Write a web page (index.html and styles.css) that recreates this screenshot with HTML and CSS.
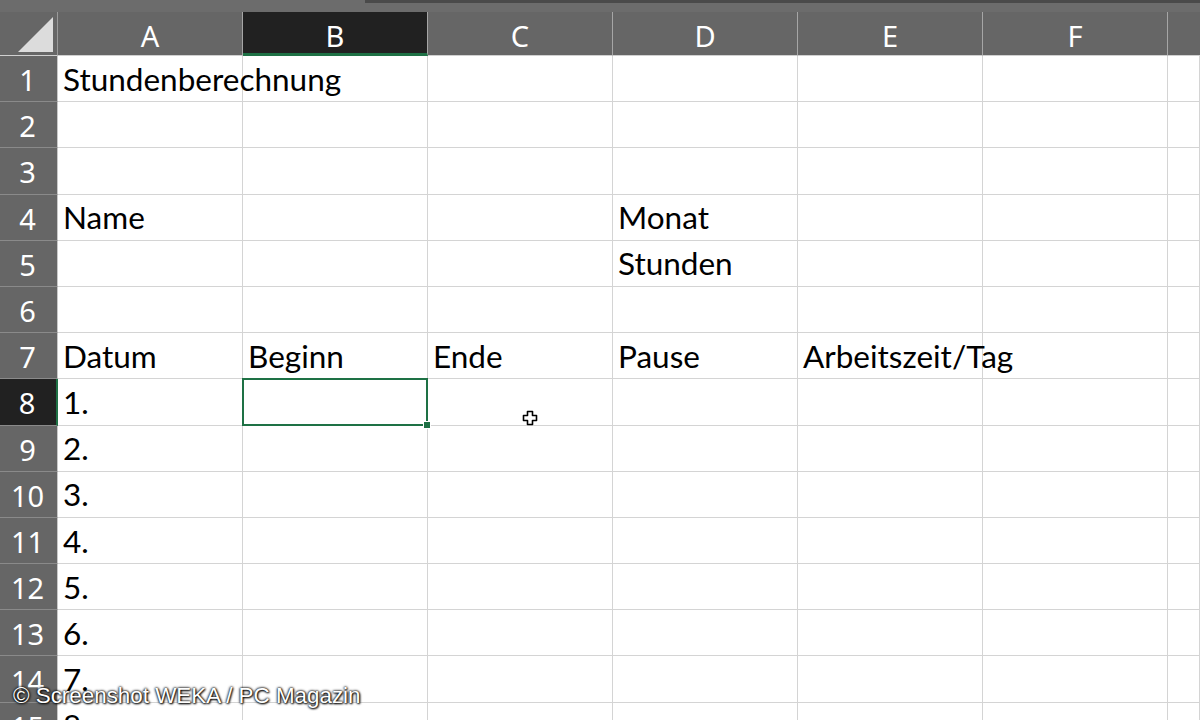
FILE: index.html
```html
<!DOCTYPE html>
<html lang="de">
<head>
<meta charset="utf-8">
<title>Stundenberechnung</title>
<link rel="stylesheet" href="styles.css">
</head>
<body>
<div class="app">
  <div class="topstrip"><div class="topbar"></div></div>
  <div class="sheet">
    <div class="corner"><svg width="58" height="43" viewBox="0 0 58 43"><polygon points="18,40 53,5 53,40" fill="#dcdcdc"/></svg></div>
    <div class="ch">A</div><div class="ch sel">B</div><div class="ch">C</div><div class="ch">D</div><div class="ch">E</div><div class="ch">F</div><div class="ch last"></div>

    <div class="rh">1</div><div class="c">Stundenberechnung</div><div class="c"></div><div class="c"></div><div class="c"></div><div class="c"></div><div class="c"></div><div class="c"></div>
    <div class="rh">2</div><div class="c"></div><div class="c"></div><div class="c"></div><div class="c"></div><div class="c"></div><div class="c"></div><div class="c"></div>
    <div class="rh">3</div><div class="c"></div><div class="c"></div><div class="c"></div><div class="c"></div><div class="c"></div><div class="c"></div><div class="c"></div>
    <div class="rh">4</div><div class="c">Name</div><div class="c"></div><div class="c"></div><div class="c">Monat</div><div class="c"></div><div class="c"></div><div class="c"></div>
    <div class="rh">5</div><div class="c"></div><div class="c"></div><div class="c"></div><div class="c">Stunden</div><div class="c"></div><div class="c"></div><div class="c"></div>
    <div class="rh">6</div><div class="c"></div><div class="c"></div><div class="c"></div><div class="c"></div><div class="c"></div><div class="c"></div><div class="c"></div>
    <div class="rh">7</div><div class="c">Datum</div><div class="c">Beginn</div><div class="c">Ende</div><div class="c">Pause</div><div class="c">Arbeitszeit/Tag</div><div class="c"></div><div class="c"></div>
    <div class="rh sel">8</div><div class="c">1.</div><div class="c active"><div class="selbox"><div class="handle"></div></div></div><div class="c"></div><div class="c"></div><div class="c"></div><div class="c"></div><div class="c"></div>
    <div class="rh">9</div><div class="c">2.</div><div class="c"></div><div class="c"></div><div class="c"></div><div class="c"></div><div class="c"></div><div class="c"></div>
    <div class="rh">10</div><div class="c">3.</div><div class="c"></div><div class="c"></div><div class="c"></div><div class="c"></div><div class="c"></div><div class="c"></div>
    <div class="rh">11</div><div class="c">4.</div><div class="c"></div><div class="c"></div><div class="c"></div><div class="c"></div><div class="c"></div><div class="c"></div>
    <div class="rh">12</div><div class="c">5.</div><div class="c"></div><div class="c"></div><div class="c"></div><div class="c"></div><div class="c"></div><div class="c"></div>
    <div class="rh">13</div><div class="c">6.</div><div class="c"></div><div class="c"></div><div class="c"></div><div class="c"></div><div class="c"></div><div class="c"></div>
    <div class="rh">14</div><div class="c">7.</div><div class="c"></div><div class="c"></div><div class="c"></div><div class="c"></div><div class="c"></div><div class="c"></div>
    <div class="rh">15</div><div class="c">8.</div><div class="c"></div><div class="c"></div><div class="c"></div><div class="c"></div><div class="c"></div><div class="c"></div>
  </div>
  <svg class="cursor" width="16" height="16" viewBox="0 0 16 16"><path d="M5.5 1.5h5v4h4v5h-4v4h-5v-4h-4v-5h4z" fill="#fff" stroke="#000" stroke-width="1.6" stroke-linejoin="round"/></svg>
  <div class="watermark">© Screenshot WEKA / PC Magazin</div>
</div>
</body>
</html>
```

FILE: styles.css
```css
* { box-sizing: border-box; }
html, body { margin: 0; padding: 0; background: #fff; }
.app {
  position: relative;
  width: 1200px;
  height: 720px;
  overflow: hidden;
  background: #fff;
}
.topstrip {
  height: 12px;
  background: #6c6c6c;
  display: flex;
}
.topbar {
  margin-left: 365px;
  flex: 1;
  height: 3px;
  background: #4a4a4a;
}
.sheet {
  display: grid;
  grid-template-columns: 58px repeat(6, 185px) 1fr;
  grid-template-rows: 44px;
  grid-auto-rows: 46.2px;
}
.corner {
  background: #666666;
  border-right: 1px solid #9a9a9a;
  border-bottom: 1px solid #d0d0d0;
}
.corner svg { display: block; }
.ch {
  background: #666666;
  color: #fff;
  font-family: "Noto Sans", "Open Sans", sans-serif;
  font-size: 29px;
  line-height: 1;
  display: flex;
  align-items: center;
  justify-content: center;
  padding-top: 4px;
  border-right: 1px solid #a6a6a6;
  border-bottom: 1px solid #d0d0d0;
}
.ch.last { border-right: none; }
.ch.sel {
  background: #212121;
  border-bottom: 3px solid #1e7145;
  padding-top: 6px;
}
.rh {
  background: #666666;
  color: #fff;
  font-family: "Noto Sans", "Open Sans", sans-serif;
  font-size: 29px;
  line-height: 1;
  display: flex;
  align-items: center;
  justify-content: center;
  padding-right: 2px;
  padding-top: 2px;
  border-right: 1px solid #c8c8c8;
  border-bottom: 1px solid #8a8a8a;
}
.rh.sel {
  background: #212121;
  border-right: 2px solid #1e7145;
}
.c {
  position: relative;
  font-family: "Lato", "Open Sans", sans-serif;
  font-size: 31.5px;
  color: #000;
  line-height: 1;
  white-space: nowrap;
  display: flex;
  align-items: flex-end;
  padding: 0 0 6px 5px;
  border-right: 1px solid #d4d4d4;
  border-bottom: 1px solid #d4d4d4;
}
.selbox {
  position: absolute;
  left: -1px;
  top: -1px;
  right: -1px;
  bottom: -1px;
  border: 2px solid #1e7145;
  z-index: 2;
}
.handle {
  position: absolute;
  right: -4px;
  bottom: -4px;
  width: 6px;
  height: 6px;
  background: #1e7145;
  outline: 1px solid #fff;
}
.cursor {
  position: absolute;
  left: 522px;
  top: 410px;
  z-index: 5;
}
.watermark {
  position: absolute;
  left: 13px;
  top: 683px;
  font-family: "Liberation Sans", Arial, sans-serif;
  font-size: 22.4px;
  color: #fff;
  text-shadow: 0 0 3px #000, 0 0 2px #000, 1px 1px 2px #222;
  z-index: 6;
}
```
